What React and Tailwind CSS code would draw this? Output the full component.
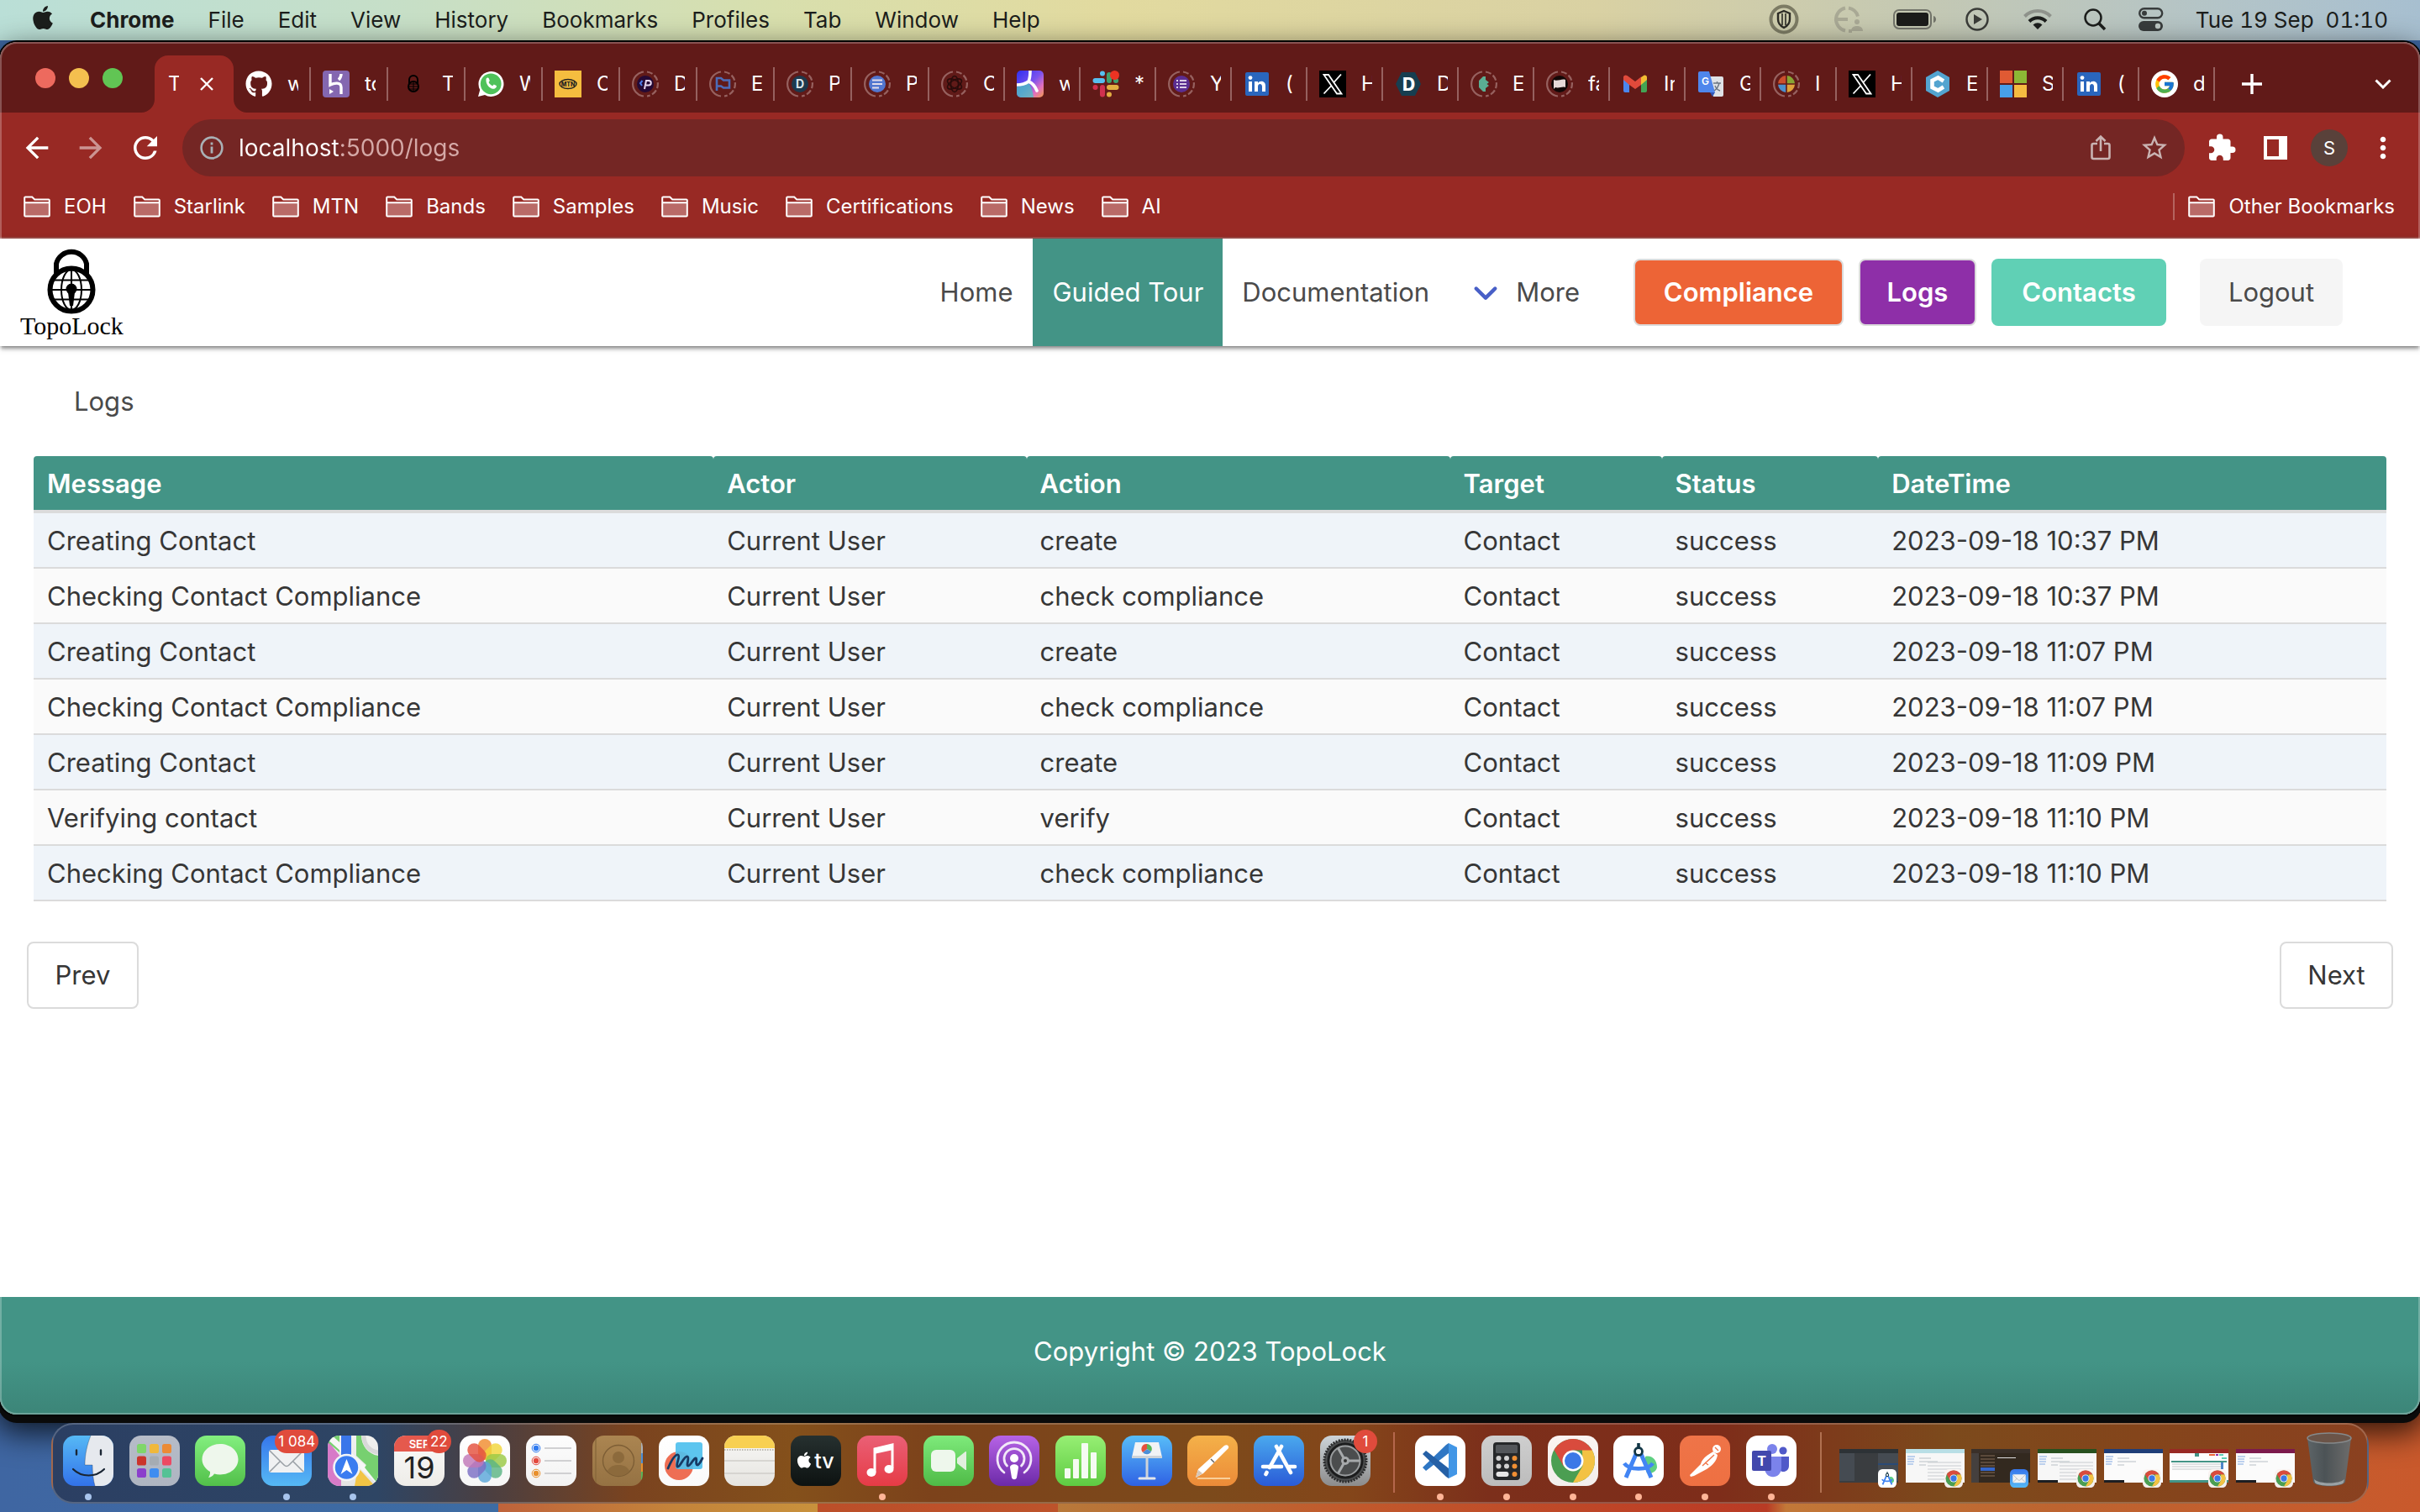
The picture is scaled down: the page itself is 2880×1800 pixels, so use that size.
import { useState } from 'react';
import {
  FaAngleDown,
  FaApple,
  FaGithub,
} from 'react-icons/fa6';
import { FcGoogle } from 'react-icons/fc';
import { MdArrowBack, MdArrowForward, MdExtension, MdMoreVert, MdRefresh, MdStarBorder } from 'react-icons/md';

const MENUS = ['File', 'Edit', 'View', 'History', 'Bookmarks', 'Profiles', 'Tab', 'Window', 'Help'];

const BOOKMARKS = ['EOH', 'Starlink', 'MTN', 'Bands', 'Samples', 'Music', 'Certifications', 'News', 'AI'];

const TABS = [
  { icon: <GithubFavicon />, label: 'w' },
  { icon: <HerokuFavicon />, label: 'to' },
  { icon: <LockFavicon />, label: 'T' },
  { icon: <WhatsappFavicon />, label: 'W' },
  { icon: <MtnFavicon />, label: 'C' },
  { icon: <PurpleCodeFavicon />, label: 'D' },
  { icon: <FlagFavicon />, label: 'E' },
  { icon: <LetterDFavicon />, label: 'P' },
  { icon: <DocsFavicon />, label: 'P' },
  { icon: <OpenAiFavicon />, label: 'C' },
  { icon: <SwirlFavicon />, label: 'w' },
  { icon: <SlackFavicon />, label: '*' },
  { icon: <FormsFavicon />, label: 'Y' },
  { icon: <LinkedinFavicon />, label: '(' },
  { icon: <XFavicon />, label: 'H' },
  { icon: <HexDFavicon />, label: 'D' },
  { icon: <PuzzleFavicon />, label: 'E' },
  { icon: <BannerFavicon />, label: 'fa' },
  { icon: <GmailFavicon />, label: 'In' },
  { icon: <TranslateFavicon />, label: 'G' },
  { icon: <PieFavicon />, label: 'I' },
  { icon: <XFavicon />, label: 'H' },
  { icon: <HexCFavicon />, label: 'E' },
  { icon: <MicrosoftFavicon />, label: 'S' },
  { icon: <LinkedinFavicon />, label: '(' },
  { icon: <GoogleFavicon />, label: 'd' },
];

const COLUMNS = ['Message', 'Actor', 'Action', 'Target', 'Status', 'DateTime'];

const LOGS = [
  { message: 'Creating Contact', action: 'create', date: '2023-09-18 10:37 PM' },
  { message: 'Checking Contact Compliance', action: 'check compliance', date: '2023-09-18 10:37 PM' },
  { message: 'Creating Contact', action: 'create', date: '2023-09-18 11:07 PM' },
  { message: 'Checking Contact Compliance', action: 'check compliance', date: '2023-09-18 11:07 PM' },
  { message: 'Creating Contact', action: 'create', date: '2023-09-18 11:09 PM' },
  { message: 'Verifying contact', action: 'verify', date: '2023-09-18 11:10 PM' },
  { message: 'Checking Contact Compliance', action: 'check compliance', date: '2023-09-18 11:10 PM' },
];

export default function App() {
  return (
    <div className="min-h-screen flex flex-col relative overflow-hidden bg-[#3f68a4] font-['Inter',sans-serif]">
      <div className="absolute inset-x-0 bottom-0 h-52 bg-[linear-gradient(90deg,#3f66a2_0%,#3d6ca3_20.6%,#bf633b_20.6%,#c4843a_28%,#c8913c_33.8%,#bc4f29_33.8%,#bd532b_43.7%,#b8793a_43.7%,#c1592c_56%,#bd4026_69%,#b83b25_73%,#c27838_73.8%,#bd6430_85%,#c9592c_100%)]" />
      <MenuBar />
      <BrowserWindow />
      <Dock />
    </div>
  );
}

function MenuBar() {
  return (
    <header className="relative h-12 shrink-0 flex items-center justify-between pl-[35px] pr-[38px] pb-0.5 text-[26px] text-[#1c1e1c] bg-[linear-gradient(90deg,#badfd7_0%,#c6dfc8_16%,#d8dfad_32%,#e2da9f_46%,#d9d1a3_66%,#c3c8b4_80%,#b3c4c8_92%,#a7bfd0_100%)]">
      <nav className="flex items-center gap-10">
        <FaApple className="w-8 h-8 -mt-1" />
        <button className="font-bold">Chrome</button>
        {MENUS.map((m) => (
          <button key={m}>{m}</button>
        ))}
      </nav>
      <div className="flex items-center">
        <StatusIcons />
        <time className="ml-[38px] whitespace-pre tabular-nums">Tue 19 Sep  01:10</time>
      </div>
    </header>
  );
}

function StatusIcons() {
  return (
    <div className="flex items-center">
      <svg className="w-9 h-9" viewBox="0 0 36 36" fill="none">
        <circle cx="18" cy="18" r="15.5" stroke="#7c7b64" strokeWidth="4" />
        <path d="M18 8l7 3v7c0 5-3 8-7 10-4-2-7-5-7-10v-7z" stroke="#2d2c26" strokeWidth="2.4" />
        <path d="M16 11v14M20 11v14" stroke="#2d2c26" strokeWidth="1.6" />
      </svg>
      <svg className="w-9 h-9 ml-10" viewBox="0 0 36 36" fill="none" stroke="#a9a995" strokeWidth="4">
        <path d="M15 4.500A14 14 0 0 0 4 18h14M4 18a14 14 0 0 0 11 13.500M19 4.500a14 14 0 0 1 11 10M19 32h4" />
        <circle cx="29" cy="21" r="3" fill="#a9a995" stroke="none" />
        <path d="M22 32c0-4 3-6 7-6s7 2 7 6z" fill="#a9a995" stroke="none" />
      </svg>
      <svg className="w-[52px] h-6 ml-9" viewBox="0 0 52 24" fill="none">
        <rect x="1" y="1" width="44" height="22" rx="6" stroke="#72746a" strokeWidth="2" />
        <rect x="4" y="4" width="38" height="16" rx="3" fill="#1b1c1a" />
        <path d="M48 8c4 1 4 7 0 8z" fill="#72746a" />
      </svg>
      <svg className="w-7 h-7 ml-[34px]" viewBox="0 0 28 28" fill="none">
        <circle cx="14" cy="14" r="12.500" stroke="#3a3c38" strokeWidth="2.500" />
        <path d="M10 8l10 6-10 6z" fill="#3a3c38" />
      </svg>
      <svg className="w-9 h-7 ml-10" viewBox="0 0 36 28" fill="none">
        <path d="M2.500 10.500a22 22 0 0 1 31 0" stroke="#8f938c" strokeWidth="4" />
        <path d="M8 16.500a14 14 0 0 1 20 0" stroke="#1c1e1c" strokeWidth="4" />
        <path d="M18 26l-5.500-5.500a8 8 0 0 1 11 0z" fill="#1c1e1c" />
      </svg>
      <svg className="w-7 h-7 ml-9" viewBox="0 0 28 28" fill="none" stroke="#1c1e1c">
        <circle cx="12" cy="12" r="9.500" strokeWidth="2.500" />
        <path d="M18.500 18.500L26 26" strokeWidth="3.600" />
      </svg>
      <svg className="w-[30px] h-7 ml-[38px]" viewBox="0 0 30 28" fill="none">
        <rect x="1.200" y="1.200" width="27" height="11" rx="5.500" stroke="#383c3c" strokeWidth="2.400" />
        <circle cx="7" cy="6.700" r="3" fill="#383c3c" />
        <rect x="0" y="16" width="29" height="12" rx="6" fill="#383c3c" />
        <circle cx="23" cy="22" r="3.200" fill="#bcc7c3" />
      </svg>
    </div>
  );
}

function BrowserWindow() {
  return (
    <main className="relative flex-1 flex flex-col mt-[2px] rounded-[20px] overflow-clip bg-white shadow-[0_0_0_2px_#000,0_8px_0_2px_#0a0a0a,0_16px_36px_6px_rgba(0,0,0,0.75)]">
      <TabStrip />
      <Toolbar />
      <BookmarksBar />
      <LogsPage />
      <div className="absolute inset-0 rounded-[20px] border-2 border-white/25 pointer-events-none" />
    </main>
  );
}

function TabStrip() {
  return (
    <div className="h-[84px] flex bg-[#611a18] text-white text-[24px] leading-7">
      <div className="flex gap-4 pl-[42px] pt-[31px] w-[184px] shrink-0">
        <button className="w-6 h-6 rounded-full bg-[#ed6a5e]" aria-label="Close window" />
        <button className="w-6 h-6 rounded-full bg-[#f4bf4f]" aria-label="Minimise window" />
        <button className="w-6 h-6 rounded-full bg-[#61c554]" aria-label="Zoom window" />
      </div>
      <div className="relative shrink-0 mt-4 w-[94px] flex items-center justify-between pl-4 pr-6 rounded-t-2xl bg-[#982924]">
        <span className="w-[13px] overflow-hidden">T</span>
        <button aria-label="Close tab">
          <svg className="w-4 h-4" viewBox="0 0 16 16" stroke="currentColor" strokeWidth="2.400">
            <path d="M1 1l14 14M15 1L1 15" />
          </svg>
        </button>
        <svg className="absolute bottom-0 -left-4 w-4 h-4" viewBox="0 0 16 16" fill="#982924">
          <path d="M16 0v16H0A16 16 0 0 0 16 0z" />
        </svg>
        <svg className="absolute bottom-0 -right-4 w-4 h-4" viewBox="0 0 16 16" fill="#982924">
          <path d="M0 0v16h16A16 16 0 0 1 0 0z" />
        </svg>
      </div>
      <div className="flex items-center pt-4 min-w-0">
        {TABS.map((tab, i) => (
          <button
            key={i}
            className={`flex items-center h-10 gap-[18px] pl-3.5 border-r-2 border-[#96615f] ${i < 9 ? 'w-[92px]' : 'w-[90px]'}`}
          >
            <span className="w-8 h-8 shrink-0">{tab.icon}</span>
            <span className="w-[13px] overflow-hidden whitespace-nowrap text-left">{tab.label}</span>
          </button>
        ))}
      </div>
      <button className="ml-8 mt-4" aria-label="New tab">
        <svg className="w-6 h-6" viewBox="0 0 24 24" stroke="currentColor" strokeWidth="3.400">
          <path d="M12 0v24M0 12h24" />
        </svg>
      </button>
      <button className="ml-auto mr-[34px] mt-4" aria-label="Search tabs">
        <svg className="w-5 h-3" viewBox="0 0 20 12" fill="none" stroke="currentColor" strokeWidth="3">
          <path d="M1.500 1.500l8.500 8.500 8.500-8.500" />
        </svg>
      </button>
    </div>
  );
}

function Toolbar() {
  return (
    <div className="h-[84px] flex items-center bg-[#982924] text-white pl-6 pr-[26px]">
      <button aria-label="Back"><MdArrowBack className="w-10 h-10" /></button>
      <button className="ml-6 opacity-50" aria-label="Forward"><MdArrowForward className="w-10 h-10" /></button>
      <button className="ml-6" aria-label="Reload"><MdRefresh className="w-[42px] h-[42px]" /></button>
      <div className="ml-[23px] flex-1 h-[68px] flex items-center rounded-full bg-[#742624] pl-[21px] pr-[18px]">
        <svg className="w-7 h-7 shrink-0" viewBox="0 0 28 28" fill="none" stroke="#a9b0b5">
          <circle cx="14" cy="14" r="12.400" strokeWidth="2.600" />
          <path d="M14 12.500v8M14 7.500v3" strokeWidth="2.800" />
        </svg>
        <input
          aria-label="Address"
          defaultValue="localhost:5000/logs"
          className="ml-[18px] flex-1 text-[28px] outline-none text-transparent bg-clip-text bg-[linear-gradient(90deg,#ffffff_122px,#d5a9a7_122px)]"
        />
        <button aria-label="Share">
          <svg className="w-6 h-8" viewBox="0 0 24 32" fill="none" stroke="#c9b3b2" strokeWidth="2.600">
            <path d="M8 11H3.500a2 2 0 0 0-2 2v14a2 2 0 0 0 2 2h17a2 2 0 0 0 2-2V13a2 2 0 0 0-2-2H16M12 20V3M6.500 8L12 2.500 17.500 8" />
          </svg>
        </button>
        <button className="ml-[34px] text-[#c9b3b2]" aria-label="Bookmark this tab"><MdStarBorder className="w-9 h-9" /></button>
      </div>
      <button className="ml-[26px]" aria-label="Extensions"><MdExtension className="w-9 h-9" /></button>
      <button className="ml-8" aria-label="Side panel">
        <svg className="w-7 h-7" viewBox="0 0 28 28" fill="currentColor">
          <path d="M0 0h28v28H0zM4 4v20h14V4z" fillRule="evenodd" />
        </svg>
      </button>
      <button className="ml-7 w-11 h-11 rounded-full bg-[#59413a] text-[22px]">S</button>
      <button className="ml-[22px] -mr-0.5" aria-label="Menu"><MdMoreVert className="w-10 h-10" /></button>
    </div>
  );
}

function BookmarksBar() {
  return (
    <div className="h-[66px] flex items-center bg-[#982924] border-b-2 border-[#a8504c] text-white text-[24px] pl-7 pr-[30px] pb-2">
      <div className="flex gap-8">
        {BOOKMARKS.map((b) => (
          <button key={b} className="flex items-center gap-4">
            <FolderIcon />
            {b}
          </button>
        ))}
      </div>
      <button className="ml-auto flex items-center gap-4">
        <span className="w-0.5 h-8 bg-[#b5645f]" />
        <FolderIcon />
        Other Bookmarks
      </button>
    </div>
  );
}

function LogsPage() {
  const [moreOpen, setMoreOpen] = useState(false);

  return (
    <div className="flex-1 flex flex-col text-[31px] leading-[48px] text-[#4a4a4a]">
      <nav className="h-32 shrink-0 flex items-stretch pl-6 pr-[92px] bg-white shadow-[0_2px_6px_rgba(0,0,0,0.6)]">
        <a href="#home" className="mr-auto flex flex-col items-center text-black" aria-label="TopoLock home">
          <TopoLockIcon />
          <span className="text-[30px] leading-8 -mt-0.5 font-['Liberation_Serif',serif]">TopoLock</span>
        </a>
        <a href="#home" className="flex items-center px-6">Home</a>
        <a href="#tour" className="flex items-center px-[23px] bg-[#439486] text-white">Guided Tour</a>
        <a href="#docs" className="flex items-center px-[23px]">Documentation</a>
        <button className="flex items-center gap-5 pl-7 pr-6" aria-expanded={moreOpen} onClick={() => setMoreOpen(o => !o)}>
          <FaAngleDown className="w-8 h-9 text-[#485fc7]" />
          More
        </button>
        <div className="flex items-center gap-[18px] ml-[40px] font-semibold text-white">
          <button className="h-20 w-[250px] rounded-lg border-2 border-[#dbdbdb] bg-[#ed6436]">Compliance</button>
          <button className="h-20 w-[140px] rounded-lg border-2 border-[#dbdbdb] bg-[#8e2fa8]">Logs</button>
          <button className="h-20 w-[208px] rounded-lg bg-[#60d0b5]">Contacts</button>
        </div>
        <div className="flex items-center ml-10">
          <button className="h-20 w-[170px] rounded-lg bg-[#f5f5f5]">Logout</button>
        </div>
      </nav>

      <div className="pl-[88px] pt-[42px] pb-[41px]">Logs</div>

      <div className="px-10">
        <table className="w-full table-fixed border-separate border-spacing-0 text-left text-[#363636]">
          <colgroup>
            <col className="w-[28.9%]" />
            <col className="w-[13.3%]" />
            <col className="w-[18%]" />
            <col className="w-[9%]" />
            <col className="w-[9.2%]" />
            <col />
          </colgroup>
          <thead>
            <tr>
              {COLUMNS.map((c) => (
                <th key={c} className="px-4 pt-[9px] pb-[7px] font-semibold text-white bg-[#439486] bg-clip-padding border-b-4 border-[#dbdbdb] rounded-t">
                  {c}
                </th>
              ))}
            </tr>
          </thead>
          <tbody>
            {LOGS.map((log, i) => (
              <tr key={i} className="odd:bg-[#eff4f9] even:bg-[#fafafa]">
                <LogCell>{log.message}</LogCell>
                <LogCell>Current User</LogCell>
                <LogCell>{log.action}</LogCell>
                <LogCell>Contact</LogCell>
                <LogCell>success</LogCell>
                <LogCell>{log.date}</LogCell>
              </tr>
            ))}
          </tbody>
        </table>
      </div>

      <div className="flex justify-between px-8 pt-12 text-[#363636]">
        <button className="h-20 w-[133px] rounded-lg border-2 border-[#dbdbdb]">Prev</button>
        <button className="h-20 w-[135px] rounded-lg border-2 border-[#dbdbdb]">Next</button>
      </div>

      <footer className="mt-auto pt-[41px] pb-[51px] text-center text-white bg-[linear-gradient(#439486_55%,#3c8578)]">
        Copyright © 2023 TopoLock
      </footer>
    </div>
  );
}

function LogCell({ children }) {
  return <td className="px-4 pt-[9px] pb-[7px] border-b-2 border-[#dbdbdb]">{children}</td>;
}

function TopoLockIcon() {
  return (
    <svg className="w-[58px] h-[80px] mt-2.5" viewBox="0 0 58 80" fill="none" stroke="#000">
      <path d="M11 34V20a18.500 18.500 0 0 1 36 0v14" strokeWidth="6" />
      <circle cx="29" cy="51" r="25.500" strokeWidth="6" fill="#fff" />
      <path d="M29 28v46M5 51h48M8 39.500h42M8 62.500h42" strokeWidth="2" />
      <ellipse cx="29" cy="51" rx="12" ry="24" strokeWidth="2" />
      <circle cx="29" cy="50" r="6.500" fill="#000" stroke="none" />
      <path d="M25 54h8l-2 16h-4z" fill="#000" stroke="none" />
    </svg>
  );
}

function FolderIcon() {
  return (
    <svg className="w-8 h-[26px]" viewBox="0 0 32 26" fill="none">
      <path d="M2 8h28v16H2z" fill="#b96a67" />
      <path d="M1.200 23V2.500a1 1 0 0 1 1-1h8l3 3h16.600a1 1 0 0 1 1 1V23.500a1 1 0 0 1-1 1H2.200a1 1 0 0 1-1-1zM1.200 8.200h29.600" stroke="#fff" strokeWidth="2" />
    </svg>
  );
}

/* Tab favicons */

// Discarded tabs show their favicon inside a broken ring
function SleepingFavicon({ children }) {
  return (
    <svg className="w-8 h-8" viewBox="0 0 32 32" fill="none">
      <path d="M14 1.500a14.600 14.600 0 0 0 0 29" stroke="#96615f" strokeWidth="2.200" />
      <path d="M18 1.500a14.600 14.600 0 0 1 0 29" stroke="#96615f" strokeWidth="2.200" strokeDasharray="7 2.600" />
      {children}
    </svg>
  );
}

function GithubFavicon() {
  return <FaGithub className="w-8 h-8" />;
}

function HerokuFavicon() {
  return (
    <svg className="w-8 h-8" viewBox="0 0 32 32" fill="none">
      <rect width="32" height="32" rx="4" fill="#8467b0" />
      <path d="M9 4v13c4-2 13-4 13 3v8M22 4c0 3-1 5-3 7" stroke="#fff" strokeWidth="3.400" />
      <path d="M8 22l5 3-5 3z" fill="#fff" />
    </svg>
  );
}

function LockFavicon() {
  return (
    <svg className="w-8 h-8" viewBox="0 0 32 32" fill="none" stroke="#000">
      <path d="M11 16v-5a5 5 0 0 1 10 0v5" strokeWidth="2" />
      <circle cx="16" cy="19" r="6" strokeWidth="2" />
      <path d="M16 13v12M10 19h12M11 16h10M11 22h10" />
    </svg>
  );
}

function WhatsappFavicon() {
  return (
    <svg className="w-8 h-8" viewBox="0 0 32 32">
      <path d="M1 31l2.200-8A15 15 0 1 1 9 29z" fill="#fff" />
      <circle cx="16.200" cy="15.800" r="12.400" fill="#4fc25a" />
      <path d="M10.500 10c1-2 3-2 3.500 0l.8 2-1.200 2c1 2 2.600 3.400 4.600 4.200l1.600-1.800 3 1.600c.6 2-1.500 4-4 3.800-4.500-.6-9-5.500-8.300-11.800z" fill="#fff" />
    </svg>
  );
}

function MtnFavicon() {
  return (
    <svg className="w-8 h-8" viewBox="0 0 32 32">
      <rect width="32" height="32" fill="#f5bd3f" />
      <ellipse cx="16" cy="16" rx="10" ry="5.500" fill="none" stroke="#222" strokeWidth="1.400" />
      <text x="16" y="18.500" fontSize="7" fontWeight="800" textAnchor="middle" fill="#222">MTN</text>
    </svg>
  );
}

function PurpleCodeFavicon() {
  return (
    <SleepingFavicon>
      <circle cx="16" cy="16" r="10" fill="#250a35" />
      <path d="M12.500 12L10 15l2 3" stroke="#4d7be8" strokeWidth="2" />
      <path d="M15 22l2-10h3a2.500 2.500 0 0 1 0 5.500h-3" stroke="#e6d8f0" strokeWidth="2" />
    </SleepingFavicon>
  );
}

function FlagFavicon() {
  return (
    <SleepingFavicon>
      <path d="M9 24V9h5l3 2.500h7v9h-7l-3-2H9" stroke="#4c6cb8" strokeWidth="2.600" />
    </SleepingFavicon>
  );
}

function LetterDFavicon() {
  return (
    <SleepingFavicon>
      <circle cx="16" cy="16" r="10" fill="#1d3a4e" />
      <text x="16" y="21" fontSize="14" fontWeight="700" textAnchor="middle" fill="#dfe6ea">D</text>
    </SleepingFavicon>
  );
}

function DocsFavicon() {
  return (
    <SleepingFavicon>
      <circle cx="16" cy="16" r="10" fill="#5276cf" />
      <path d="M10 11.500h12M10 16h12M10 20.500h8" stroke="#e2dcea" strokeWidth="2.200" />
    </SleepingFavicon>
  );
}

function OpenAiFavicon() {
  return (
    <SleepingFavicon>
      <g stroke="#2a0c0b" strokeWidth="1.600">
        <ellipse cx="16" cy="16" rx="4.500" ry="9.500" />
        <ellipse cx="16" cy="16" rx="4.500" ry="9.500" transform="rotate(60 16 16)" />
        <ellipse cx="16" cy="16" rx="4.500" ry="9.500" transform="rotate(120 16 16)" />
      </g>
    </SleepingFavicon>
  );
}

function SwirlFavicon() {
  return (
    <svg className="w-8 h-8" viewBox="0 0 32 32" fill="none">
      <defs>
        <linearGradient id="swirl" x1="0" y1="0" x2="1" y2="1">
          <stop offset="0" stopColor="#2e2ff0" />
          <stop offset=".5" stopColor="#7c52ee" />
          <stop offset=".75" stopColor="#e06fc0" />
          <stop offset="1" stopColor="#f39b4a" />
        </linearGradient>
        <clipPath id="swirl-clip">
          <rect width="32" height="32" rx="5" />
        </clipPath>
      </defs>
      <g clipPath="url(#swirl-clip)">
        <rect width="32" height="32" fill="url(#swirl)" />
        <path d="M0 19c5-1 9-3 13-6 3 4 6 9 7 19H0z" fill="#49c4c0" opacity=".75" />
        <path d="M16 0c0 5 0 9-2 13-4 3-9 4-14 4M14 13c5 2 8 6 10 11" stroke="#fff" strokeWidth="3.600" strokeLinecap="round" />
      </g>
    </svg>
  );
}

function SlackFavicon() {
  return (
    <svg className="w-8 h-8" viewBox="0 0 32 32" strokeWidth="6" strokeLinecap="round">
      <path d="M3.500 12H12M12 3.500v.1" stroke="#57bff0" />
      <path d="M20 5v7M28 12h.1" stroke="#3fa06e" />
      <path d="M20 20h8.500M20 28.500v.1" stroke="#e2ae42" />
      <path d="M12 20v8.500M3.500 20h.1" stroke="#d0304f" />
      <circle cx="26.500" cy="5.500" r="5.500" fill="#ec3323" />
    </svg>
  );
}

function FormsFavicon() {
  return (
    <SleepingFavicon>
      <circle cx="16" cy="16" r="10" fill="#5b2e91" />
      <path d="M10 12h2M14 12h8M10 16h2M14 16h8M10 20h2M14 20h8" stroke="#dccfe6" strokeWidth="2" />
    </SleepingFavicon>
  );
}

function LinkedinFavicon() {
  return (
    <svg className="w-8 h-8" viewBox="0 0 32 32">
      <rect x="2" y="2" width="28" height="28" rx="2" fill="#2a66bd" />
      <path d="M6 13h4v12H6zM13 13h4v2c2-3.500 9-3 9 3v7h-4v-6c0-4-5-4-5 0v6h-4z" fill="#fff" />
      <circle cx="8" cy="8.600" r="2.400" fill="#fff" />
    </svg>
  );
}

function XFavicon() {
  return (
    <svg className="w-8 h-8" viewBox="0 0 32 32" fill="none" stroke="#fff">
      <rect width="32" height="32" fill="#000" stroke="none" />
      <path d="M5.500 5h5.500l15.500 22.500H21zM26 4.500L17.500 14M14 18.500L5.500 27.500" strokeWidth="1.800" />
    </svg>
  );
}

function HexDFavicon() {
  return (
    <svg className="w-8 h-8" viewBox="0 0 32 32">
      <path d="M8 2h16l7 14-7 14H8L1 16z" fill="#173e50" />
      <text x="16.500" y="23.500" fontSize="21" fontWeight="800" textAnchor="middle" fill="#fff">D</text>
    </svg>
  );
}

function PuzzleFavicon() {
  return (
    <SleepingFavicon>
      <path d="M10 12l5-5h3v4l4 3-2.500 2 2.500 2-4 3v4h-3l-5-5z" fill="#5aae93" />
    </SleepingFavicon>
  );
}

function BannerFavicon() {
  return (
    <SleepingFavicon>
      <circle cx="16" cy="16" r="10" fill="#120807" />
      <path d="M9 11c4 2.500 10-2 14 0v9c-4-1.500-8 1.500-12 0l-2 2z" fill="#e6d9d8" />
    </SleepingFavicon>
  );
}

function GmailFavicon() {
  return (
    <svg className="w-8 h-8" viewBox="0 0 32 32">
      <path d="M2 8v16a2 2 0 0 0 2 2h5V13z" fill="#4a86ee" />
      <path d="M30 8v16a2 2 0 0 1-2 2h-5V13z" fill="#43a454" />
      <path d="M23 8l3-2c2-1 4 0 4 2v3l-7 6z" fill="#f2bd33" />
      <path d="M2 8c0-2 2.500-3.500 4.500-2L16 13l7-5.500V17l-7 5-7-5-7-6z" fill="#e14a3b" />
    </svg>
  );
}

function TranslateFavicon() {
  return (
    <svg className="w-8 h-8" viewBox="0 0 32 32">
      <path d="M13 7h16a2 2 0 0 1 2 2v20a2 2 0 0 1-2 2H19z" fill="#dfe2e6" />
      <path d="M3 1h11l7 25H3a2 2 0 0 1-2-2V3a2 2 0 0 1 2-2z" fill="#4f86ec" />
      <path d="M15 26h6l-3 5z" fill="#3057b8" />
      <text x="9.500" y="17" fontSize="12" fontWeight="600" textAnchor="middle" fill="#fff">G</text>
      <path d="M19 15h9M23.500 13v2M26 15c-1 4-3 7-6 9M21 18c1 3 3 5 6 6" fill="none" stroke="#6b7784" strokeWidth="1.400" />
    </svg>
  );
}

function PieFavicon() {
  return (
    <SleepingFavicon>
      <path d="M15.200 15.200V6a10 10 0 0 0-9.200 9.200z" fill="#cb4f2d" />
      <path d="M16.800 15.200V6a10 10 0 0 1 9.200 9.200z" fill="#87a534" />
      <path d="M15.200 16.800V26A10 10 0 0 1 6 16.800z" fill="#4c8fcd" />
      <path d="M16.800 16.800V26a10 10 0 0 0 9.200-9.200z" fill="#dfa23c" />
    </SleepingFavicon>
  );
}

function HexCFavicon() {
  return (
    <svg className="w-8 h-8" viewBox="0 0 32 32" fill="none">
      <path d="M16 0l14 8v16l-14 8-14-8V8z" fill="#53a4d0" />
      <path d="M23 12.500L16.500 8.500 9.500 12v8l7 3.500 6.500-4" stroke="#fff" strokeWidth="4.600" />
    </svg>
  );
}

function MicrosoftFavicon() {
  return (
    <svg className="w-8 h-8" viewBox="0 0 32 32">
      <path d="M0 0h15v15H0z" fill="#e05a33" />
      <path d="M17 0h15v15H17z" fill="#8cb735" />
      <path d="M0 17h15v15H0z" fill="#479fe8" />
      <path d="M17 17h15v15H17z" fill="#f5bb41" />
    </svg>
  );
}

function GoogleFavicon() {
  return (
    <span className="flex items-center justify-center w-8 h-8 rounded-full bg-white">
      <FcGoogle className="w-[26px] h-[26px]" />
    </span>
  );
}

/* Dock */

const DOCK_APPS = [
  { name: 'Finder', icon: <FinderIcon />, running: true },
  { name: 'Launchpad', icon: <LaunchpadIcon /> },
  { name: 'Messages', icon: <MessagesIcon /> },
  { name: 'Mail', icon: <MailIcon />, running: true, badge: '1 084' },
  { name: 'Maps', icon: <MapsIcon />, running: true },
  { name: 'Calendar', icon: <CalendarIcon />, badge: '22' },
  { name: 'Photos', icon: <PhotosIcon /> },
  { name: 'Reminders', icon: <RemindersIcon /> },
  { name: 'Contacts', icon: <ContactsIcon /> },
  { name: 'Freeform', icon: <FreeformIcon /> },
  { name: 'Notes', icon: <NotesIcon /> },
  { name: 'TV', icon: <TvIcon /> },
  { name: 'Music', icon: <MusicIcon />, running: true },
  { name: 'FaceTime', icon: <FaceTimeIcon /> },
  { name: 'Podcasts', icon: <PodcastsIcon /> },
  { name: 'Numbers', icon: <NumbersIcon /> },
  { name: 'Keynote', icon: <KeynoteIcon /> },
  { name: 'Pages', icon: <PagesIcon /> },
  { name: 'App Store', icon: <AppStoreIcon /> },
  { name: 'System Settings', icon: <SettingsIcon />, badge: '1' },
];

const RECENT_APPS = [
  { name: 'Visual Studio Code', icon: <VsCodeIcon />, running: true },
  { name: 'Calculator', icon: <CalculatorIcon />, running: true },
  { name: 'Chrome', icon: <ChromeIcon />, running: true },
  { name: 'Android Studio', icon: <AndroidStudioIcon />, running: true },
  { name: 'Postman', icon: <PostmanIcon />, running: true },
  { name: 'Teams', icon: <TeamsIcon />, running: true },
];

const MINIMISED = [
  { bar: '#2d3236', body: '#3a3d40', dark: true, badge: <AndroidStudioIcon /> },
  { bar: '#b9dfe6', body: '#f7f7f7', badge: <ChromeIcon />, rows: true },
  { bar: '#3a3029', body: '#33291f', dark: true, blue: true, badge: <MailIcon /> },
  { bar: '#27501f', body: '#f7f7f7', badge: <ChromeIcon />, rows: true, status: true },
  { bar: '#1f3e78', body: '#fbfbfb', badge: <ChromeIcon />, status: true },
  { bar: '#982924', body: '#fdfdfd', badge: <ChromeIcon />, teal: true },
  { bar: '#7c1a4c', body: '#fbfbfb', badge: <ChromeIcon />, status: true },
];

function Dock() {
  return (
    <div className="relative shrink-0 mt-2.5 mb-2.5 mx-[61px] h-24 flex items-start pt-[13px] pl-3 pr-[18px] rounded-[26px] border-2 border-white/20 bg-[linear-gradient(90deg,#2b3f63_0%,#2e4564_14%,#4c3f40_19%,#7a431f_25%,#84501b_32%,#7c421b_38%,#7c4a1b_50%,#84461a_56%,#7c2f1b_62%,#7e2d1a_72%,#7c4a1c_82%,#84451b_90%,#8a4120_100%)]">
      <div className="flex justify-between w-[1556px]">
        {DOCK_APPS.map((app) => <DockItem key={app.name} {...app} />)}
      </div>
      <div className="ml-[27px] -mt-1 w-0.5 h-[72px] bg-[#b4674c]" />
      <div className="ml-6 flex justify-between w-[454px]">
        {RECENT_APPS.map((app) => <DockItem key={app.name} {...app} warm />)}
      </div>
      <div className="ml-7 -mt-1 w-0.5 h-[72px] bg-[#b07050]" />
      <div className="ml-[21px] mt-2.5 flex justify-between w-[542px]">
        {MINIMISED.map((w, i) => <Thumbnail key={i} {...w} />)}
      </div>
      <button className="ml-auto -mt-1" aria-label="Trash"><TrashIcon /></button>
    </div>
  );
}

function DockItem({ name, icon, running, badge }) {
  const warm = !['Finder', 'Mail', 'Maps'].includes(name);
  return (
    <button className="relative w-[60px] h-[78px] flex flex-col items-center" aria-label={name}>
      <span className="block w-[60px] h-[60px]">{icon}</span>
      {running && <span className={`mt-[9px] w-2 h-2 rounded-full ${warm ? 'bg-[#ffb597]' : 'bg-[#a8c4ec]'}`} />}
      {badge && (
        <span className="absolute -top-[7px] -right-2 h-7 min-w-7 px-1 rounded-full bg-[#e04b3c] text-white text-[17px] leading-7 text-center whitespace-nowrap">
          {badge}
        </span>
      )}
    </button>
  );
}

function Thumbnail({ bar, body, dark, blue, badge, rows, status, teal }) {
  return (
    <button className="relative w-[70px] h-[52px]" aria-label="Minimised window">
      <svg className="w-[70px] h-10" viewBox="0 0 70 40">
        <rect width="70" height="40" fill={body} />
        <rect width="70" height="5" fill={bar} />
        {!dark && !teal && <path d="M2 9h9M2 12h8M2 15h8M2 18h7" stroke="#a9c4ea" strokeWidth="1.400" />}
        {!dark && !teal && <path d="M16 11h14M16 15h22M16 19h8" stroke="#b9c0c6" />}
        {rows && <path d="M26 16h40M26 20h40M26 24h40M26 28h40M26 32h40M26 36h40" stroke="#c9ccd0" />}
        {status && <rect y="37" width="24" height="3" fill="#1c1e22" />}
        {teal && (
          <>
            <path d="M30 5h5v4h-5z" fill="#439486" />
            <path d="M47 6h7v2h-7z" fill="#ed6436" />
            <path d="M55 6h3v2h-3z" fill="#8e2fa8" />
            <path d="M59 6h5v2h-5zM62 10h6v2h-6z" fill="#60d0b5" />
            <path d="M2 14h66v2H2zM0 37h70v3H0z" fill="#439486" />
            <path d="M3 18h58M3 21h58M3 24h58" stroke="#c2c6c8" />
            <path d="M61 16h3v8h-3z" fill="#4e86c8" />
          </>
        )}
        {dark && !blue && <path d="M0 5h18v33H0zM46 5h24v33H46z" fill="#454b52" />}
        {dark && !blue && <path d="M46 17h24v2H46z" fill="#2a4a76" />}
        {dark && blue && <path d="M0 5h9v35H0z" fill="#45403e" />}
        {dark && blue && <path d="M11 8h17M11 12h17M11 16h17M11 20h17M11 28h17M11 32h17" stroke="#6a5646" strokeWidth="1.600" />}
        {dark && blue && <path d="M11 22h17v4H11z" fill="#3467cc" />}
        {dark && blue && <path d="M31 10h22v1H31z" fill="#ddd" />}
      </svg>
      <span className="absolute right-0.5 bottom-0 w-[22px] h-[22px] [&>svg]:w-[22px] [&>svg]:h-[22px]">{badge}</span>
    </button>
  );
}

// Rounded square every dock app icon sits on
function AppTile({ from, to, id, children }) {
  return (
    <svg className="w-[60px] h-[60px]" viewBox="0 0 60 60" fill="none">
      <defs>
        <linearGradient id={id} x1="0" y1="0" x2="0" y2="1">
          <stop offset="0" stopColor={from} />
          <stop offset="1" stopColor={to} />
        </linearGradient>
        <clipPath id={`${id}-clip`}>
          <rect width="60" height="60" rx="14" />
        </clipPath>
      </defs>
      <rect width="60" height="60" rx="14" fill={`url(#${id})`} />
      <g clipPath={`url(#${id}-clip)`}>{children}</g>
    </svg>
  );
}

function FinderIcon() {
  return (
    <AppTile id="finder" from="#56b9f5" to="#3272ea">
      <path d="M33 0c-4 10-7 22-7 35h9c0 9 1 18 3 25h22V0z" fill="#e6e9ee" />
      <path d="M16 17.500v5M45 17.500v5" stroke="#1a2533" strokeWidth="2.400" strokeLinecap="round" />
      <path d="M12 40c10 10 27 10 37 0" stroke="#1a2533" strokeWidth="2.200" strokeLinecap="round" />
      <path d="M33 0c-4 10-7 22-7 35h9c0 9 1 18 3 25" stroke="#1a2533" strokeOpacity=".3" />
    </AppTile>
  );
}

function LaunchpadIcon() {
  const dots = ['#7fd66a', '#f0b83c', '#ec8b36', '#cb342c', '#a5acb3', '#ec4a63', '#8b3fcc', '#3f8df0', '#54c295'];
  return (
    <AppTile id="launchpad" from="#b6bcc8" to="#aeb5c1">
      {dots.map((c, i) => (
        <rect key={c} x={9 + (i % 3) * 15} y={10 + Math.floor(i / 3) * 14.5} width="11" height="11" rx="2.600" fill={c} />
      ))}
    </AppTile>
  );
}

function MessagesIcon() {
  return (
    <AppTile id="messages" from="#83ef7f" to="#52c04a">
      <path d="M30 10c12 0 21.500 8 21.500 18.200S42 46.400 30 46.400c-2.500 0-4.800-.4-7-1-1.500 2.500-4 4.200-7 4.600 1.500-2 2.300-4.600 2-6.900-5.500-3.300-9.500-8.700-9.500-14.900C8.500 18 18 10 30 10z" fill="#eef7ec" />
    </AppTile>
  );
}

function MailIcon() {
  return (
    <AppTile id="mail" from="#3676ec" to="#56b9f5">
      <rect x="9" y="17" width="42" height="27" rx="3" fill="#f0f1f2" />
      <path d="M10 18l17 17c2 2 4 2 6 0l17-17M10 43l13-13M50 43L37 30" stroke="#9aa0a6" strokeWidth="1.600" />
    </AppTile>
  );
}

function MapsIcon() {
  return (
    <AppTile id="maps" from="#f1f1ef" to="#e4e4e4">
      <path d="M0 6l16 20v34H0z" fill="#d77bc8" />
      <path d="M0 0h14v20L0 8z" fill="#77d070" />
      <path d="M34 0h6c0 12 8 22 20 24v24L34 24z" fill="#77d070" />
      <path d="M0 0l60 54" stroke="#f7f7f7" strokeWidth="7" />
      <path d="M36 38l20 22H32z" fill="#f2c445" />
      <path d="M60 58V44L48 32l-4 6z" fill="#77d070" />
      <path d="M22 0v38" stroke="#3a76ea" strokeWidth="12" />
      <path d="M43 0c0 11 7 19 17 20" stroke="#d8d8d8" strokeWidth="5" />
      <circle cx="22.500" cy="38" r="15" fill="#3a7cf0" stroke="#f2f4f7" strokeWidth="2.600" />
      <path d="M22.500 28l7 18-7-5-7 5z" fill="#fff" />
    </AppTile>
  );
}

function CalendarIcon() {
  return (
    <AppTile id="calendar" from="#fbfbfa" to="#eeece8">
      <path d="M0 0h60v19H0z" fill="#e5594d" />
      <text x="30" y="15" fontSize="13" fontWeight="600" textAnchor="middle" fill="#fff">SEP</text>
      <text x="30" y="51" fontSize="36" textAnchor="middle" fill="#222">19</text>
    </AppTile>
  );
}

function PhotosIcon() {
  const petals = ['#f08c2e', '#f1d63b', '#9bc945', '#5cb584', '#5ba7da', '#7b6fc4', '#c178b8', '#e4513d'];
  return (
    <AppTile id="photos" from="#ffffff" to="#f6f6f6">
      {petals.map((c, i) => (
        <rect key={c} x="22" y="4" width="16" height="25" rx="8" fill={c} fillOpacity=".82" transform={`rotate(${i * 45} 30 30)`} />
      ))}
    </AppTile>
  );
}

function RemindersIcon() {
  return (
    <AppTile id="reminders" from="#fdfdfd" to="#f2f2f2">
      {['#2f7af0', '#e3493e', '#e8902d'].map((c, i) => (
        <g key={c}>
          <circle cx="12" cy={15 + i * 15} r="3.200" fill={c} />
          <circle cx="12" cy={15 + i * 15} r="4.800" stroke={c} strokeWidth="1" />
          <path d={`M22 ${15 + i * 15}h32`} stroke="#c3c3c6" strokeWidth="1.600" />
        </g>
      ))}
    </AppTile>
  );
}

function ContactsIcon() {
  return (
    <AppTile id="contacts" from="#ab8551" to="#957243">
      <path d="M58 9h2v12h-2z" fill="#a9b0b8" />
      <path d="M58 21h2v12h-2z" fill="#4b8fd8" />
      <path d="M58 33h2v10h-2z" fill="#e8902d" />
      <path d="M58 43h2v11h-2z" fill="#58b657" />
      <path d="M4 0v60" stroke="#8a6a3d" strokeWidth="1.500" />
      <circle cx="31" cy="30" r="18.500" stroke="#7d5e35" strokeWidth="1.400" />
      <circle cx="31" cy="26" r="7" fill="#8c6a3c" />
      <path d="M18 42c3-6 8-7 13-7s10 1 13 7c-6 8-20 8-26 0z" fill="#8c6a3c" />
    </AppTile>
  );
}

function FreeformIcon() {
  return (
    <AppTile id="freeform" from="#ffffff" to="#fafafa">
      <circle cx="24" cy="36" r="17" fill="#ee6e54" />
      <rect x="20" y="8" width="32" height="32" rx="3" fill="#4fc0ee" fillOpacity=".92" />
      <path d="M11 39c3-7 8-17 12-16 3 1-3 12-1 14 3 2 8-13 12-12 3 1-2 11 1 11s6-9 9-9c2 0-1 8 2 8 2 0 4-4 6-8" stroke="#173a64" strokeWidth="2.800" strokeLinecap="round" />
    </AppTile>
  );
}

function NotesIcon() {
  return (
    <AppTile id="notes" from="#f8f8f6" to="#e6e4e0">
      <path d="M0 0h60v15H0z" fill="#f8d052" />
      <path d="M0 17h60" stroke="#a9a59c" strokeWidth="1.600" strokeDasharray="1.500 1.500" />
      <path d="M0 30h60M0 45h60" stroke="#cfcdc9" strokeWidth="1.400" />
    </AppTile>
  );
}

function TvIcon() {
  return (
    <AppTile id="tv" from="#26302f" to="#0d1211">
      <FaApple x="5" y="18" size={22} color="#fff" />
      <text x="40" y="39" fontSize="25" fontWeight="500" textAnchor="middle" fill="#fff">tv</text>
    </AppTile>
  );
}

function MusicIcon() {
  return (
    <AppTile id="music" from="#ea6076" to="#e63b46">
      <path d="M21 44V16l21-5v28" stroke="#fff" strokeWidth="3" />
      <path d="M20 15l23-5v7l-23 5z" fill="#fff" />
      <ellipse cx="17" cy="44" rx="5.500" ry="5" fill="#fff" />
      <ellipse cx="38" cy="40" rx="5.500" ry="5" fill="#fff" />
    </AppTile>
  );
}

function FaceTimeIcon() {
  return (
    <AppTile id="facetime" from="#7eea7b" to="#4fbb47">
      <rect x="9" y="17" width="29" height="26" rx="6" fill="#eef7ec" />
      <path d="M40 27l10-8c1 0 1 0 1 1v20c0 1 0 1-1 1l-10-8z" fill="#e1efdf" />
    </AppTile>
  );
}

function PodcastsIcon() {
  return (
    <AppTile id="podcasts" from="#b663e6" to="#6c2aa8">
      <path d="M18 44a20 20 0 1 1 24 0" stroke="#f2e8f8" strokeWidth="2.800" strokeLinecap="round" />
      <path d="M21.500 36a12 12 0 1 1 17 0" stroke="#f2e8f8" strokeWidth="2.800" strokeLinecap="round" />
      <circle cx="30" cy="27" r="5" fill="#fff" />
      <path d="M25 38c0-5 10-5 10 0l-2 12c-1 3-5 3-6 0z" fill="#fff" />
    </AppTile>
  );
}

function NumbersIcon() {
  return (
    <AppTile id="numbers" from="#97ef74" to="#5ecb42">
      <g fill="#f5fbf2">
        <rect x="11" y="39" width="7" height="12" rx="1" />
        <rect x="21" y="28" width="7" height="23" rx="1" />
        <rect x="31" y="9" width="8" height="42" rx="1" />
        <rect x="42" y="20" width="7" height="31" rx="1" />
      </g>
    </AppTile>
  );
}

function KeynoteIcon() {
  return (
    <AppTile id="keynote" from="#57bdf8" to="#2f62e4">
      <path d="M16 8h28l4 18H12z" fill="#f1f3f5" />
      <path d="M12 24h36v3H12z" fill="#cdd3d9" />
      <path d="M30 16v-6a6 6 0 0 1 5 9z" fill="#58b657" />
      <path d="M30 16l5 3a6 6 0 0 1-10 1z" fill="#4b8fd8" />
      <path d="M30 16l-5 4a6 6 0 0 1 5-10z" fill="#e4513d" />
      <path d="M30 27v23" stroke="#cdd3d9" strokeWidth="3" />
      <path d="M21 51h18" stroke="#e3e6e9" strokeWidth="3" strokeLinecap="round" />
    </AppTile>
  );
}

function PagesIcon() {
  return (
    <AppTile id="pages" from="#f4b149" to="#ec8b38">
      <path d="M10 50l3-10L44 12c3-2 6 0 5 3L19 45z" fill="#fff" />
      <path d="M10 50l3-9 5 4z" fill="#d5c5b5" />
      <path d="M12 51h39" stroke="#f9cf9a" strokeWidth="1.800" />
      <path d="M28 28l4 4" stroke="#666" strokeWidth="1.600" />
    </AppTile>
  );
}

function AppStoreIcon() {
  return (
    <AppTile id="appstore" from="#4aa9ee" to="#2a5bd7">
      <path d="M33 13L19 38M27 13l17 31M15.500 44l-1 2" stroke="#fff" strokeWidth="4.600" strokeLinecap="round" />
      <path d="M11 37h22M42 37h7" stroke="#fff" strokeWidth="4.600" strokeLinecap="round" />
    </AppTile>
  );
}

function SettingsIcon() {
  return (
    <AppTile id="settings" from="#cdd4d9" to="#8c8c8c">
      <circle cx="30" cy="30" r="25" fill="#4b4d4e" stroke="#2a2b2c" strokeWidth="3" strokeDasharray="2 1.400" />
      <circle cx="30" cy="30" r="20" stroke="#1c1d1e" strokeWidth="3" />
      <circle cx="30" cy="30" r="17.500" stroke="#999c9e" strokeWidth="2" />
      <path d="M30 30h17M30 30l-8.500-15M30 30l-8.500 15" stroke="#a6a9ab" strokeWidth="3" />
      <circle cx="30" cy="30" r="5" fill="#a6a9ab" />
      <circle cx="30" cy="30" r="2" fill="#333" />
    </AppTile>
  );
}

function VsCodeIcon() {
  return (
    <AppTile id="vscode" from="#ffffff" to="#ffffff">
      <path d="M40 9v12L13 42l-4-4 28-27z" fill="#2f77c4" />
      <path d="M40 51V39L13 18l-4 4 28 27z" fill="#2560a6" />
      <path d="M40 9l10 5v32l-10 5z" fill="#4296e6" />
    </AppTile>
  );
}

function CalculatorIcon() {
  return (
    <AppTile id="calculator" from="#cfcfcf" to="#bcbcbc">
      <rect x="14" y="8" width="32" height="45" rx="4" fill="#26282a" />
      <rect x="17" y="11" width="26" height="10" rx="1.500" fill="#53565a" />
      {[27, 36.5].map((y) => (
        <g key={y}>
          <circle cx="20.500" cy={y} r="3" fill="#d0d0d0" />
          <circle cx="30" cy={y} r="3" fill="#d0d0d0" />
          <circle cx="39.500" cy={y} r="3" fill="#ef8f34" />
        </g>
      ))}
      <rect x="17.500" y="43" width="15" height="6" rx="3" fill="#e6e6e6" />
      <circle cx="39.500" cy="46" r="3" fill="#ef8f34" />
    </AppTile>
  );
}

function ChromeIcon() {
  return (
    <AppTile id="chrome" from="#fbf4f2" to="#f3eeec">
      <circle cx="30" cy="30" r="26" fill="#4b9e52" />
      <path d="M7.500 17A26 26 0 0 1 52.500 17H30L18.700 36.500z" fill="#d94b3d" />
      <path d="M52.500 17A26 26 0 0 1 30 56l11.300-19.500L41 17z" fill="#f3c244" />
      <path d="M30 17h22.500" stroke="#d94b3d" strokeWidth="1" />
      <circle cx="30" cy="30" r="12.500" fill="#fff" />
      <circle cx="30" cy="30" r="10" fill="#3b78e7" />
    </AppTile>
  );
}

function AndroidStudioIcon() {
  return (
    <AppTile id="androidstudio" from="#ffffff" to="#ffffff">
      <path d="M38 25c8-2 14 4 14 13H38zM38 38h14c-1 5-7 8-12 7z" fill="#5fd082" />
      <path d="M30 9v6" stroke="#123646" strokeWidth="3.600" />
      <path d="M27 22L15 50M33 22l12 28" stroke="#4285f4" strokeWidth="5" />
      <path d="M13 33c5 8 28 9 34 0" stroke="#4285f4" strokeWidth="4.600" />
      <circle cx="30" cy="19" r="4.500" fill="#fff" stroke="#123646" strokeWidth="2.800" />
    </AppTile>
  );
}

function PostmanIcon() {
  return (
    <AppTile id="postman" from="#ef7448" to="#ee7042">
      <circle cx="44" cy="16" r="5" fill="#fff" />
      <path d="M40 19l5 4c-1 8-7 13-13 17L17 48l-4 1-1-2 13-13c2-7 8-11 15-15z" fill="#fff" />
      <path d="M27 36l14-13M30 32l4 3M42 14l4 4" stroke="#ef7448" strokeWidth="1.400" />
    </AppTile>
  );
}

function TeamsIcon() {
  return (
    <AppTile id="teams" from="#ffffff" to="#ffffff">
      <circle cx="44" cy="18" r="4.600" fill="#5059c9" />
      <path d="M40 25h11v11c0 7-8 9-11 5z" fill="#5059c9" />
      <circle cx="31" cy="16" r="6" fill="#7b83eb" />
      <path d="M22 25h20v13c0 15-20 15-20 0z" fill="#7b83eb" />
      <rect x="7" y="18" width="23" height="24" rx="2" fill="#4248ad" />
      <text x="18.500" y="36" fontSize="16" fontWeight="700" textAnchor="middle" fill="#fff">T</text>
    </AppTile>
  );
}

function TrashIcon() {
  return (
    <svg className="w-[54px] h-[66px]" viewBox="0 0 54 66">
      <defs>
        <linearGradient id="trash" x1="0" y1="0" x2="1" y2="0">
          <stop offset="0" stopColor="#5d6467" />
          <stop offset=".4" stopColor="#4c5356" />
          <stop offset="1" stopColor="#6d6c6b" />
        </linearGradient>
      </defs>
      <path d="M1 7l7 52c2 7 36 7 38 0l7-52z" fill="url(#trash)" />
      <path d="M9 56c6 6 30 6 36 0l-1 4c-4 5-30 5-34 0z" fill="#9aa1a4" />
      <ellipse cx="27" cy="7" rx="26" ry="6" fill="#6b5448" stroke="#85898b" strokeWidth="1.600" />
    </svg>
  );
}
